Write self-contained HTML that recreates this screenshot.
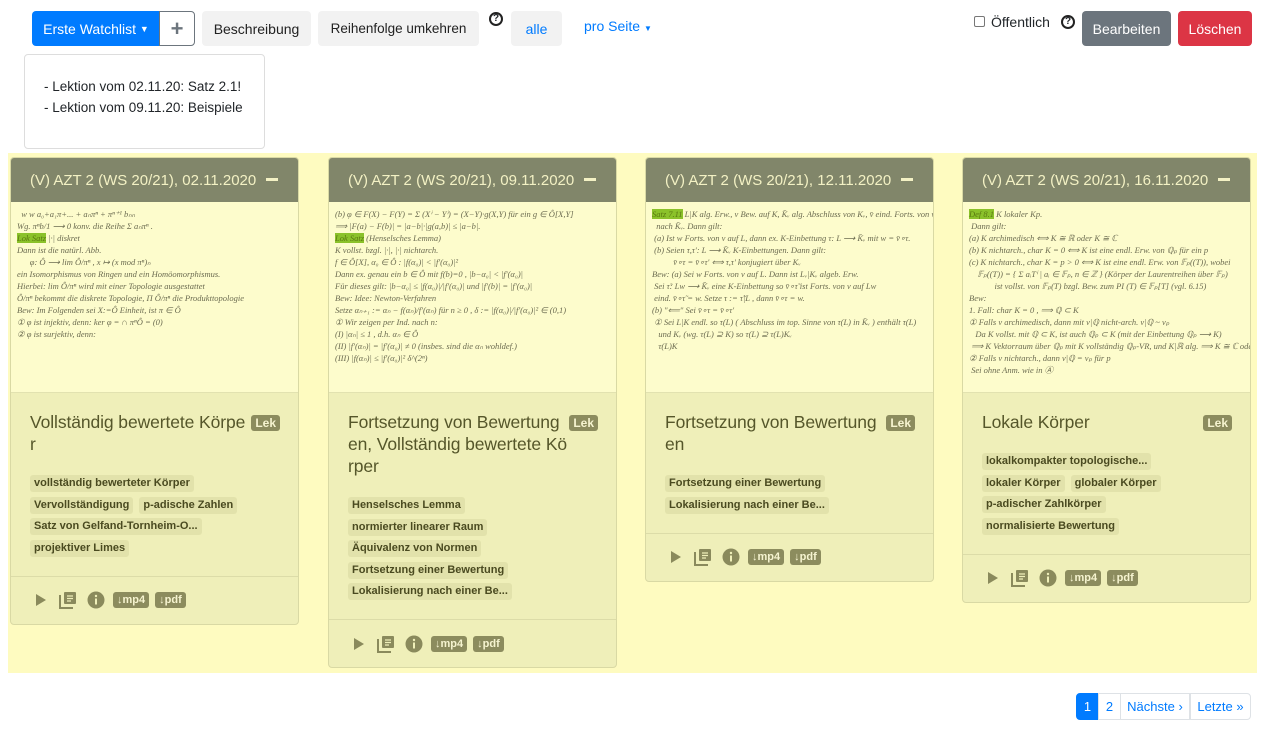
<!DOCTYPE html>
<html><head><meta charset="utf-8"><style>
*{box-sizing:border-box}
body{margin:0;width:1263px;height:731px;background:#fff;font-family:"Liberation Sans",sans-serif;position:relative;overflow:hidden;color:#212529}
.btn{position:absolute;height:35px;border-radius:4px;font-size:14px;display:flex;align-items:center;justify-content:center}
.q{position:absolute;width:14px;height:14px;border:2px solid #222;border-radius:50%;font-size:10px;font-weight:bold;display:flex;align-items:center;justify-content:center;line-height:1}
.band{position:absolute;left:8px;top:153px;width:1249px;height:520px;background:#fefbc0}
.card{position:absolute;top:157px;width:289px;background:#efefb9;border:1px solid #d9d9a4;border-radius:4px;overflow:hidden}
.hd{height:44px;background:#81866a;color:#f3f1c4;font-size:15px;padding:0 0 0 19px;display:flex;align-items:center;position:relative}
.hd:after{content:"";position:absolute;right:20px;top:20px;width:12px;height:3px;background:#f3f1c4}
.img{height:191px;background:#fdfccc;border-bottom:1px solid #e2e2b0;padding:6px 6px 0 6px;font-family:"Liberation Serif",serif;font-style:italic;font-size:8.5px;color:#6b6b50;line-height:12px;overflow:hidden;white-space:nowrap;position:relative}
.img .hl{background:#8bc22a;color:#5a7a10}
.bd{padding:18px 18px 19px 19px;position:relative}
.tt{font-size:17.5px;line-height:22px;color:#55562a;margin-bottom:20px;white-space:nowrap;letter-spacing:-0.1px}
.lek{position:absolute;right:18px;top:22px;background:#8c8c5e;color:#f6f4d0;font-size:12px;font-weight:bold;padding:1px 4px;border-radius:3px;line-height:14px}
.tags{display:flex;flex-wrap:wrap;row-gap:4.5px;column-gap:6px}
.tag{background:#e2e2ab;color:#4a4a20;font-size:11px;font-weight:bold;padding:0 4px;height:17px;line-height:17px;border-radius:3px}
.ft{border-top:1px solid #dcdca8;height:48px;display:flex;align-items:center;padding-left:22px;gap:0}
.b2{background:#8c8c5e;color:#f6f4d0;font-size:11px;font-weight:bold;padding:0 4px;height:16px;line-height:16px;border-radius:3px;margin-right:6px}
.pg{position:absolute;top:693px;height:27px;font-size:13px;color:#007bff;display:flex;align-items:center;justify-content:center;border:1px solid #dee2e6;margin-left:-1px}
</style></head><body>
<div class="btn" style="left:32px;top:11px;width:128px;background:#007bff;color:#fff;border-radius:4px 0 0 4px">Erste Watchlist&nbsp;<span style="font-size:9px">▼</span></div>
<div class="btn" style="left:159px;top:11px;width:36px;border:1px solid #6c757d;border-radius:0 4px 4px 0;color:#6c757d;font-size:22px;font-weight:bold">+</div>
<div class="btn" style="left:202px;top:11px;width:109px;background:#f2f2f2;color:#222">Beschreibung</div>
<div class="btn" style="left:318px;top:11px;width:161px;background:#f2f2f2;color:#222;font-size:13.5px">Reihenfolge umkehren</div>
<div class="q" style="left:489px;top:12px">?</div>
<div class="btn" style="left:511px;top:11px;width:51px;background:#f2f2f2;color:#007bff">alle</div>
<div style="position:absolute;left:584px;top:18px;font-size:14px;color:#007bff">pro Seite <span style="font-size:8px">▼</span></div>
<div style="position:absolute;left:974px;top:16px;width:11px;height:11px;border:1px solid #777;border-radius:2px"></div>
<div style="position:absolute;left:991px;top:14px;font-size:14px">Öffentlich</div>
<div class="q" style="left:1061px;top:15px">?</div>
<div class="btn" style="left:1082px;top:11px;width:89px;background:#6c757d;color:#fff;font-size:14px">Bearbeiten</div>
<div class="btn" style="left:1178px;top:11px;width:74px;background:#dc3545;color:#fff;font-size:14px">Löschen</div>
<div style="position:absolute;left:24px;top:54px;width:241px;height:95px;border:1px solid #ddd;border-radius:4px;padding:21px 0 0 19px;font-size:13.5px;line-height:21px">- Lektion vom 02.11.20: Satz 2.1!<br>- Lektion vom 09.11.20: Beispiele</div>
<div class="band"></div>

<div class="card" style="left:10px">
<div class="hd">(V) AZT 2 (WS 20/21), 02.11.2020</div>
<div class="img">&nbsp;&nbsp;w w a₀+a₁π+... + aₙπⁿ + πⁿ⁺¹ bₙₙ<br>Wg. πⁿb/1 ⟶ 0 konv. die Reihe Σ aₙπⁿ .<br><span class="hl">Lok Satz</span> |·| diskret<br>Dann ist die natürl. Abb.<br>&nbsp;&nbsp;&nbsp;&nbsp;&nbsp;&nbsp;φ: Ô ⟶ lim Ô/πⁿ , x ↦ (x mod πⁿ)ₙ<br>ein Isomorphismus von Ringen und ein Homöomorphismus.<br>Hierbei: lim Ô/πⁿ wird mit einer Topologie ausgestattet<br>Ô/πⁿ bekommt die diskrete Topologie, Π Ô/πⁿ die Produkttopologie<br>Bew: Im Folgenden sei X:=Ô Einheit, ist π ∈ Ô<br>① φ ist injektiv, denn: ker φ = ∩ πⁿÔ = (0)<br>② φ ist surjektiv, denn:</div>
<div class="bd"><div class="tt">Vollständig bewertete Körpe<br>r</div><span class="lek">Lek</span>
<div class="tags"><span class="tag">vollständig bewerteter Körper</span><span class="tag">Vervollständigung</span><span class="tag">p-adische Zahlen</span><span class="tag">Satz von Gelfand-Tornheim-O...</span><span class="tag">projektiver Limes</span></div></div>
<div class="ft"><svg width="16" height="16" viewBox="0 0 16 16" style="margin-right:10px"><path d="M3 2L13 8L3 14Z" fill="#8a8a5c"/></svg><svg width="18" height="18" viewBox="0 0 18 18" style="margin-right:10px"><path d="M1 4v13h13" stroke="#8a8a5c" stroke-width="2" fill="none"/><rect x="5" y="1" width="12" height="12" rx="1" fill="#8a8a5c"/><path d="M8 5h6M8 7.5h6M8 10h4" stroke="#efefb9" stroke-width="1.3"/></svg><svg width="18" height="18" viewBox="0 0 18 18" style="margin-right:8px"><circle cx="9" cy="9" r="8.5" fill="#8a8a5c"/><rect x="8" y="7.5" width="2" height="6" fill="#efefb9"/><circle cx="9" cy="5" r="1.2" fill="#efefb9"/></svg><span class="b2">↓mp4</span><span class="b2">↓pdf</span></div>
</div>

<div class="card" style="left:328px">
<div class="hd">(V) AZT 2 (WS 20/21), 09.11.2020</div>
<div class="img">(b) φ ∈ F(X) − F(Y) = Σ (Xⁱ − Yⁱ) = (X−Y)·g(X,Y) für ein g ∈ Ô[X,Y]<br>⟹ |F(a) − F(b)| = |a−b|·|g(a,b)| ≤ |a−b|.<br><span class="hl">Lok Satz</span> (Henselsches Lemma)<br>K vollst. bzgl. |·|, |·| nichtarch.<br>f ∈ Ô[X], α₀ ∈ Ô : |f(α₀)| &lt; |f'(α₀)|²<br>Dann ex. genau ein b ∈ Ô mit f(b)=0 , |b−α₀| &lt; |f'(α₀)|<br>Für dieses gilt: |b−α₀| ≤ |f(α₀)|/|f'(α₀)| und |f'(b)| = |f'(α₀)|<br>Bew: Idee: Newton-Verfahren<br>Setze αₙ₊₁ := αₙ − f(αₙ)/f'(αₙ) für n ≥ 0 , δ := |f(α₀)|/|f'(α₀)|² ∈ (0,1)<br>① Wir zeigen per Ind. nach n:<br>(I) |αₙ| ≤ 1 , d.h. αₙ ∈ Ô<br>(II) |f'(αₙ)| = |f'(α₀)| ≠ 0 (insbes. sind die αₙ wohldef.)<br>(III) |f(αₙ)| ≤ |f'(α₀)|² δ^(2ⁿ)</div>
<div class="bd"><div class="tt">Fortsetzung von Bewertung<br>en, Vollständig bewertete Kö<br>rper</div><span class="lek">Lek</span>
<div class="tags"><span class="tag">Henselsches Lemma</span><span class="tag">normierter linearer Raum</span><span class="tag">Äquivalenz von Normen</span><span class="tag">Fortsetzung einer Bewertung</span><span class="tag">Lokalisierung nach einer Be...</span></div></div>
<div class="ft"><svg width="16" height="16" viewBox="0 0 16 16" style="margin-right:10px"><path d="M3 2L13 8L3 14Z" fill="#8a8a5c"/></svg><svg width="18" height="18" viewBox="0 0 18 18" style="margin-right:10px"><path d="M1 4v13h13" stroke="#8a8a5c" stroke-width="2" fill="none"/><rect x="5" y="1" width="12" height="12" rx="1" fill="#8a8a5c"/><path d="M8 5h6M8 7.5h6M8 10h4" stroke="#efefb9" stroke-width="1.3"/></svg><svg width="18" height="18" viewBox="0 0 18 18" style="margin-right:8px"><circle cx="9" cy="9" r="8.5" fill="#8a8a5c"/><rect x="8" y="7.5" width="2" height="6" fill="#efefb9"/><circle cx="9" cy="5" r="1.2" fill="#efefb9"/></svg><span class="b2">↓mp4</span><span class="b2">↓pdf</span></div>
</div>

<div class="card" style="left:645px">
<div class="hd">(V) AZT 2 (WS 20/21), 12.11.2020</div>
<div class="img"><span class="hl">Satz 7.11</span> L|K alg. Erw., v Bew. auf K, K̄ᵥ alg. Abschluss von Kᵥ, v̄ eind. Forts. von v<br>&nbsp;&nbsp;nach K̄ᵥ. Dann gilt:<br>&nbsp;(a) Ist w Forts. von v auf L, dann ex. K-Einbettung τ: L ⟶ K̄ᵥ mit w = v̄∘τ.<br>&nbsp;(b) Seien τ,τ': L ⟶ K̄ᵥ K-Einbettungen. Dann gilt:<br>&nbsp;&nbsp;&nbsp;&nbsp;&nbsp;&nbsp;&nbsp;&nbsp;&nbsp;&nbsp;v̄∘τ = v̄∘τ' ⟺ τ,τ' konjugiert über Kᵥ<br>Bew: (a) Sei w Forts. von v auf L. Dann ist Lᵥ|Kᵥ algeb. Erw.<br>&nbsp;Sei τ̃: Lw ⟶ K̄ᵥ eine K-Einbettung so v̄∘τ̃ ist Forts. von v auf Lw<br>&nbsp;eind. v̄∘τ̃ = w. Setze τ := τ̃|L , dann v̄∘τ = w.<br>(b) "⟸" Sei v̄∘τ = v̄∘τ'<br>&nbsp;① Sei L|K endl. so τ(L) ( Abschluss im top. Sinne von τ(L) in K̄ᵥ ) enthält τ(L)<br>&nbsp;&nbsp;&nbsp;und Kᵥ (wg. τ(L) ⊇ K) so τ(L) ⊇ τ(L)Kᵥ<br>&nbsp;&nbsp;&nbsp;τ(L)K</div>
<div class="bd"><div class="tt">Fortsetzung von Bewertung<br>en</div><span class="lek">Lek</span>
<div class="tags"><span class="tag">Fortsetzung einer Bewertung</span><span class="tag">Lokalisierung nach einer Be...</span></div></div>
<div class="ft"><svg width="16" height="16" viewBox="0 0 16 16" style="margin-right:10px"><path d="M3 2L13 8L3 14Z" fill="#8a8a5c"/></svg><svg width="18" height="18" viewBox="0 0 18 18" style="margin-right:10px"><path d="M1 4v13h13" stroke="#8a8a5c" stroke-width="2" fill="none"/><rect x="5" y="1" width="12" height="12" rx="1" fill="#8a8a5c"/><path d="M8 5h6M8 7.5h6M8 10h4" stroke="#efefb9" stroke-width="1.3"/></svg><svg width="18" height="18" viewBox="0 0 18 18" style="margin-right:8px"><circle cx="9" cy="9" r="8.5" fill="#8a8a5c"/><rect x="8" y="7.5" width="2" height="6" fill="#efefb9"/><circle cx="9" cy="5" r="1.2" fill="#efefb9"/></svg><span class="b2">↓mp4</span><span class="b2">↓pdf</span></div>
</div>

<div class="card" style="left:962px">
<div class="hd">(V) AZT 2 (WS 20/21), 16.11.2020</div>
<div class="img"><span class="hl">Def 8.1</span> K lokaler Kp.<br>&nbsp;Dann gilt:<br>(a) K archimedisch ⟺ K ≅ ℝ oder K ≅ ℂ<br>(b) K nichtarch., char K = 0 ⟺ K ist eine endl. Erw. von ℚₚ für ein p<br>(c) K nichtarch., char K = p &gt; 0 ⟺ K ist eine endl. Erw. von 𝔽ₚ((T)), wobei<br>&nbsp;&nbsp;&nbsp;&nbsp;𝔽ₚ((T)) = { Σ aᵢTⁱ | aᵢ ∈ 𝔽ₚ, n ∈ ℤ } (Körper der Laurentreihen über 𝔽ₚ)<br>&nbsp;&nbsp;&nbsp;&nbsp;&nbsp;&nbsp;&nbsp;&nbsp;&nbsp;&nbsp;&nbsp;&nbsp;ist vollst. von 𝔽ₚ(T) bzgl. Bew. zum PI (T) ∈ 𝔽ₚ[T] (vgl. 6.15)<br>Bew:<br>1. Fall: char K = 0 , ⟹ ℚ ⊂ K<br>① Falls v archimedisch, dann mit v|ℚ nicht-arch. v|ℚ ~ vₚ<br>&nbsp;&nbsp;&nbsp;Da K vollst. mit ℚ ⊂ K, ist auch ℚₚ ⊂ K (mit der Einbettung ℚₚ ⟶ K)<br>&nbsp;⟹ K Vektorraum über ℚₚ mit K vollständig ℚₚ-VR, und K|ℝ alg. ⟹ K ≅ ℂ oder K ≅ ℝ<br>② Falls v nichtarch., dann v|ℚ = vₚ für p<br>&nbsp;Sei ohne Anm. wie in Ⓐ</div>
<div class="bd"><div class="tt">Lokale Körper</div><span class="lek">Lek</span>
<div class="tags"><span class="tag">lokalkompakter topologische...</span><span class="tag">lokaler Körper</span><span class="tag">globaler Körper</span><span class="tag">p-adischer Zahlkörper</span><span class="tag">normalisierte Bewertung</span></div></div>
<div class="ft"><svg width="16" height="16" viewBox="0 0 16 16" style="margin-right:10px"><path d="M3 2L13 8L3 14Z" fill="#8a8a5c"/></svg><svg width="18" height="18" viewBox="0 0 18 18" style="margin-right:10px"><path d="M1 4v13h13" stroke="#8a8a5c" stroke-width="2" fill="none"/><rect x="5" y="1" width="12" height="12" rx="1" fill="#8a8a5c"/><path d="M8 5h6M8 7.5h6M8 10h4" stroke="#efefb9" stroke-width="1.3"/></svg><svg width="18" height="18" viewBox="0 0 18 18" style="margin-right:8px"><circle cx="9" cy="9" r="8.5" fill="#8a8a5c"/><rect x="8" y="7.5" width="2" height="6" fill="#efefb9"/><circle cx="9" cy="5" r="1.2" fill="#efefb9"/></svg><span class="b2">↓mp4</span><span class="b2">↓pdf</span></div>
</div>

<div class="pg" style="left:1076px;width:23px;background:#007bff;color:#fff;border-color:#007bff;border-radius:4px 0 0 4px;margin-left:0">1</div>
<div class="pg" style="left:1099px;width:23px">2</div>
<div class="pg" style="left:1121px;width:70px">Nächste ›</div>
<div class="pg" style="left:1191px;width:61px;border-radius:0 4px 4px 0">Letzte »</div>
</body></html>
